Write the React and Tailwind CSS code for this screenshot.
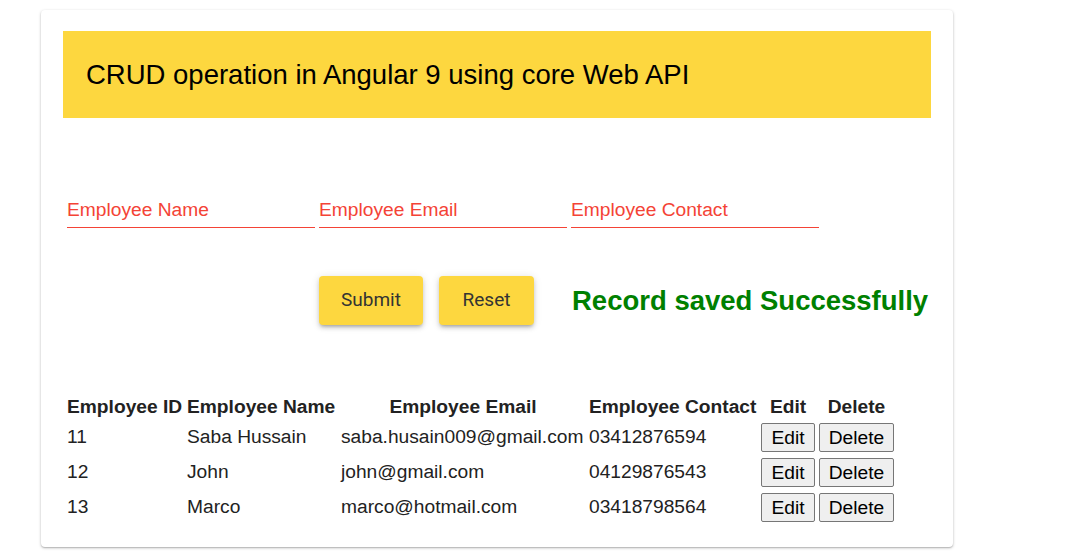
import React from 'react';

const employees = [
  { id: 11, name: 'Saba Hussain', email: 'saba.husain009@gmail.com', contact: '03412876594' },
  { id: 12, name: 'John', email: 'john@gmail.com', contact: '04129876543' },
  { id: 13, name: 'Marco', email: 'marco@hotmail.com', contact: '03418798564' },
];

const fields = ['Employee Name', 'Employee Email', 'Employee Contact'];

export default function App() {
  return (
    <div className="w-[1080px] h-[558px] bg-white overflow-hidden font-['Liberation_Sans',Arial,sans-serif]">
      <div className="ml-[41px] mt-[10px] w-[912px] h-[537px] bg-white rounded-[4px] shadow-[0_1px_3px_rgba(0,0,0,0.25),0_1px_1px_rgba(0,0,0,0.12)] px-[22px] pt-[21px]">
        <div className="h-[87px] bg-[#fdd73f] flex items-center pl-[23px]">
          <h1 className="text-[27.5px] text-black leading-none">CRUD operation in Angular 9 using core Web API</h1>
        </div>

        <div className="flex gap-[4px] ml-[4px] mt-[80px]">
          {fields.map((f) => (
            <div key={f} className="w-[248px] h-[30px] border-b border-[#f44336] flex items-start">
              <span className="text-[19.2px] leading-[23px] text-[#f44336]">{f}</span>
            </div>
          ))}
        </div>

        <div className="flex items-center ml-[256px] mt-[48px]">
          <button className="w-[104px] h-[49px] bg-[#fdd73f] rounded-[4px] text-[19px] text-[#333] font-['Roboto',sans-serif] shadow-[0_3px_3px_-2px_rgba(0,0,0,0.2),0_3px_4px_rgba(0,0,0,0.14),0_1px_8px_rgba(0,0,0,0.12)]">
            Submit
          </button>
          <button className="w-[95px] h-[49px] ml-[16px] bg-[#fdd73f] rounded-[4px] text-[19px] text-[#333] font-['Roboto',sans-serif] shadow-[0_3px_3px_-2px_rgba(0,0,0,0.2),0_3px_4px_rgba(0,0,0,0.14),0_1px_8px_rgba(0,0,0,0.12)]">
            Reset
          </button>
          <span className="ml-[38px] text-[27.5px] leading-none font-bold text-[#008000]">Record saved Successfully</span>
        </div>

        <table className="table-fixed w-[833px] mt-[67px] ml-[1px] border-separate border-spacing-[2px] text-[19.2px] text-[#222]">
          <thead>
            <tr className="h-[25px] leading-[25px]">
              <th className="w-[118px] px-[1px] font-bold text-left whitespace-nowrap">Employee ID</th>
              <th className="w-[152px] px-[1px] font-bold text-left whitespace-nowrap">Employee Name</th>
              <th className="w-[246px] px-[1px] font-bold text-center whitespace-nowrap">Employee Email</th>
              <th className="w-[170px] px-[1px] font-bold text-left whitespace-nowrap">Employee Contact</th>
              <th className="w-[56px] px-[1px] font-bold text-center">Edit</th>
              <th className="w-[77px] px-[1px] font-bold text-center">Delete</th>
            </tr>
          </thead>
          <tbody>
            {employees.map((e) => (
              <tr key={e.id} className="h-[33px]">
                <td className="px-[1px] whitespace-nowrap">{e.id}</td>
                <td className="px-[1px] whitespace-nowrap">{e.name}</td>
                <td className="px-[1px] whitespace-nowrap">{e.email}</td>
                <td className="px-[1px] whitespace-nowrap">{e.contact}</td>
                <td className="px-[1px]">
                  <button className="w-[54px] h-[29px] bg-[#efefef] border border-[#767676] rounded-[2px] text-[19.2px] text-black">Edit</button>
                </td>
                <td className="px-[1px]">
                  <button className="w-[75px] h-[29px] bg-[#efefef] border border-[#767676] rounded-[2px] text-[19.2px] text-black">Delete</button>
                </td>
              </tr>
            ))}
          </tbody>
        </table>
      </div>
    </div>
  );
}
